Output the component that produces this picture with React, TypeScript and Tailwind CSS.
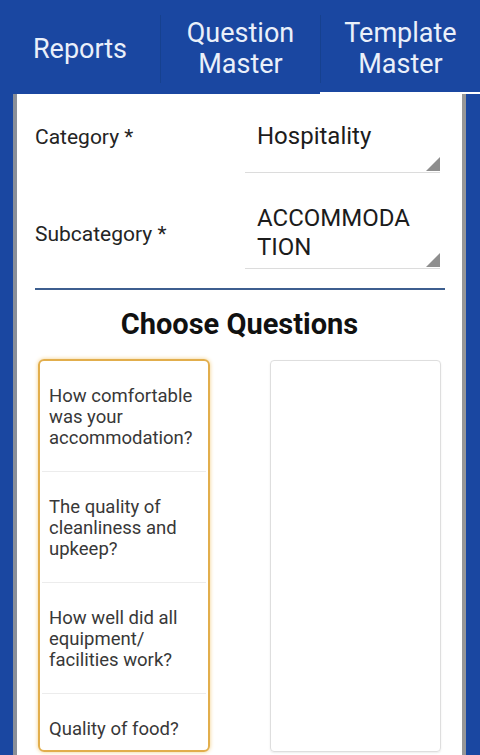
const font = { fontFamily: 'Roboto, "Noto Sans", sans-serif' };

const tabs = [
  { lines: ['Reports'], active: false },
  { lines: ['Question', 'Master'], active: false },
  { lines: ['Template', 'Master'], active: true },
];

const questions = [
  'How comfortable was your accommodation?',
  'The quality of cleanliness and upkeep?',
  'How well did all equipment/\u200Bfacilities work?',
  'Quality of food?',
];

function Caret() {
  return (
    <svg className="absolute right-0 bottom-[1px]" width="14" height="14" viewBox="0 0 14 14">
      <polygon points="14,0 14,14 0,14" fill="#8e8e8e" />
    </svg>
  );
}

export default function App() {
  return (
    <div className="flex h-[755px] w-[480px] flex-col overflow-hidden bg-[#1a47a1]" style={font}>
      {/* tab bar */}
      <div className="grid h-[92px] grid-cols-3">
        {tabs.map((t, i) => (
          <div key={i} className="flex items-center pt-[15px] pb-[9px]">
            <div
              className={
                'flex h-full w-full flex-col items-center justify-center text-[27px] leading-[31px] text-[#eaf0fa] ' +
                (i > 0 ? 'border-l border-[#16418f]' : '')
              }
            >
              {t.lines.map((l) => (
                <span key={l}>{l}</span>
              ))}
            </div>
          </div>
        ))}
      </div>
      <div className="grid h-[2px] grid-cols-3">
        <div />
        <div />
        <div className="bg-white" />
      </div>

      {/* card */}
      <div className="ml-[13px] flex w-[453px] flex-1 flex-col border-l-4 border-r-4 border-l-[#8a8f98] border-r-[#979797] bg-white">
        <div className="grid grid-cols-[210px_195px] pt-[22px] pl-[18px]">
          <div className="mt-[8px] text-[21px] leading-[26px] text-[#242424]">Category *</div>
          <div className="relative h-[57px] border-b border-[#dcdcdc] pt-[6px] pl-[12px]">
            <div className="text-[24px] leading-[29px] text-[#1c1c1c]">Hospitality</div>
            <Caret />
          </div>

          <div className="mt-[26px] flex items-center text-[21px] leading-[26px] text-[#242424]">Subcategory *</div>
          <div className="relative mt-[26px] h-[70px] border-b border-[#dcdcdc] pt-[5px] pl-[12px]">
            <div className="w-[158px] break-all text-[24px] leading-[29px] text-[#1c1c1c]">ACCOMMODATION</div>
            <Caret />
          </div>
        </div>

        <div className="mt-[19px] mr-[17px] ml-[18px] h-[2px] bg-[#3d5e8f]" />

        <h2 className="mt-[19px] text-center text-[29px] leading-[30px] font-bold text-[#111]">Choose Questions</h2>

        <div className="mt-[20px] flex justify-between px-[21px]">
          <div className="h-[393px] w-[172px] overflow-hidden rounded-[6px] border-2 border-[#e2ae4c] shadow-[0_0_4px_#f3cf86]">
            {questions.map((q, i) => (
              <div
                key={i}
                className={
                  'mx-[2px] pt-[25px] pb-[22px] pr-[4px] pl-[7px] text-[18.5px] leading-[21px] text-[#383838] ' +
                  (i < questions.length - 1 ? 'border-b border-[#ececec]' : '')
                }
              >
                {q}
              </div>
            ))}
          </div>
          <div className="mt-[1px] h-[392px] w-[171px] rounded-[4px] border border-[#dedede] shadow-[0_1px_2px_rgba(0,0,0,0.08)]" />
        </div>
      </div>
    </div>
  );
}
